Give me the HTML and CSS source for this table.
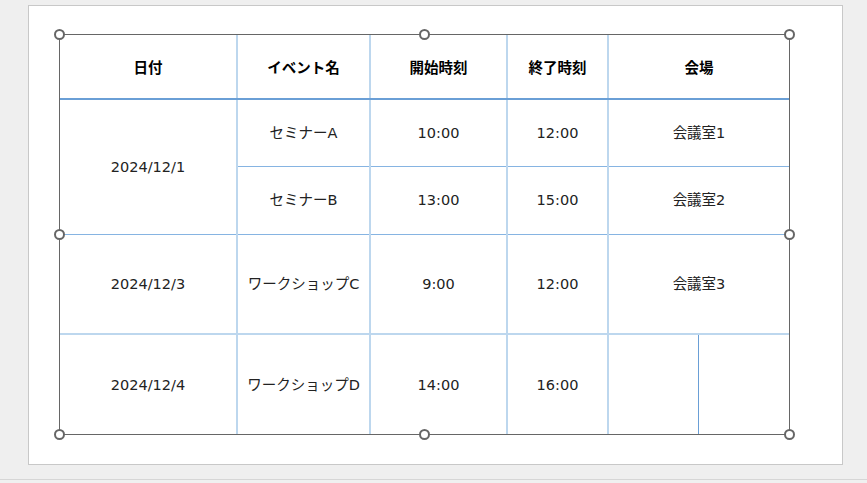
FILE: index.html
```html
<!DOCTYPE html>
<html lang="ja">
<head>
<meta charset="utf-8">
<link rel="stylesheet" href="styles.css">
</head>
<body>
<div class="workspace">
  <div class="slide">
    <div class="frame">
      <table class="schedule">
        <colgroup>
          <col class="c1"><col class="c2"><col class="c3"><col class="c4"><col class="c5a"><col class="c5b">
        </colgroup>
        <thead>
          <tr class="head">
            <th>日付</th><th>イベント名</th><th>開始時刻</th><th>終了時刻</th><th colspan="2" class="last">会場</th>
          </tr>
        </thead>
        <tbody>
          <tr class="r1">
            <td rowspan="2" class="date">2024/12/1</td><td>セミナーA</td><td>10:00</td><td>12:00</td><td colspan="2" class="last">会議室1</td>
          </tr>
          <tr class="r2">
            <td>セミナーB</td><td>13:00</td><td>15:00</td><td colspan="2" class="last">会議室2</td>
          </tr>
          <tr class="r3">
            <td>2024/12/3</td><td>ワークショップC</td><td>9:00</td><td>12:00</td><td colspan="2" class="last">会議室3</td>
          </tr>
          <tr class="r4">
            <td>2024/12/4</td><td>ワークショップD</td><td>14:00</td><td>16:00</td><td class="split"></td><td class="last"></td>
          </tr>
        </tbody>
      </table>
      <span class="handle h-tl"></span>
      <span class="handle h-tm"></span>
      <span class="handle h-tr"></span>
      <span class="handle h-ml"></span>
      <span class="handle h-mr"></span>
      <span class="handle h-bl"></span>
      <span class="handle h-bm"></span>
      <span class="handle h-br"></span>
    </div>
  </div>
</div>
<div class="statusbar"></div>
</body>
</html>
```
FILE: styles.css
```css
html, body {
  margin: 0;
  padding: 0;
}
body {
  background: #efefef;
  width: 867px;
  height: 483px;
  overflow: hidden;
  font-family: "DejaVu Sans", "Noto Sans CJK JP", sans-serif;
}
.workspace {
  height: 479px;
  padding: 5px 0 0 28px;
  box-sizing: border-box;
}
.slide {
  background: #fff;
  border: 1px solid #c8c8c8;
  padding: 28px 0 0 30px;
  box-sizing: content-box;
  width: 783px;
  height: 430px;
}
.frame {
  position: relative;
  width: 731px;
  height: 401px;
  border: 1px solid #666;
  box-sizing: border-box;
}
.schedule {
  border-collapse: collapse;
  table-layout: fixed;
  width: 729px;
  height: 399px;
}
.c1 { width: 177px; }
.c2 { width: 133px; }
.c3 { width: 137px; }
.c4 { width: 101px; }
.c5a { width: 90px; }
.c5b { width: 91px; }
.schedule th, .schedule td {
  padding: 0;
  text-align: center;
  vertical-align: middle;
  font-size: 14.5px;
  line-height: 18px;
  border-right: 2px solid #bdd7ee;
}
.schedule th {
  font-family: "Noto Sans CJK JP", sans-serif;
  font-weight: bold;
  color: #000;
  border-bottom: 2px solid #6a9fd6;
}
.schedule td {
  color: #222;
  font-weight: normal;
}
.schedule .last {
  border-right: none;
}
.head { height: 64px; }
.r1 { height: 67px; }
.r2 { height: 68px; }
.r3 { height: 100px; }
.r4 { height: 100px; }
.r1 td, .r2 td { border-bottom: 1px solid #86b4e2; }
.r3 td { border-bottom: 2px solid #bdd7ee; }
.r4 td.split { border-right: 1px solid #6a9fd6; }
.handle {
  position: absolute;
  width: 11px;
  height: 11px;
  box-sizing: border-box;
  border: 2px solid #666;
  border-radius: 50%;
  background: #fff;
}
.h-tl { left: -6px; top: -6px; }
.h-tm { left: 359px; top: -6px; }
.h-tr { right: -6px; top: -6px; }
.h-ml { left: -6px; top: 194px; }
.h-mr { right: -6px; top: 194px; }
.h-bl { left: -6px; bottom: -6px; }
.h-bm { left: 359px; bottom: -6px; }
.h-br { right: -6px; bottom: -6px; }
.statusbar {
  height: 4px;
  border-top: 1px solid #d6d6d6;
  background: #f0f0f0;
}
```
